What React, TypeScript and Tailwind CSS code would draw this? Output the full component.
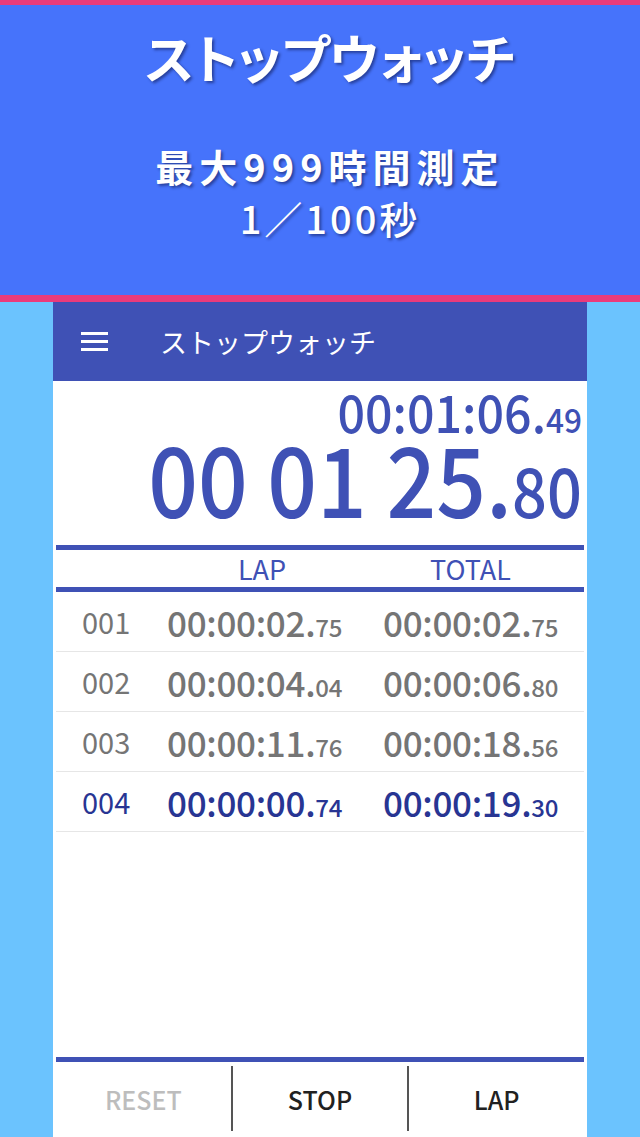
import React from "react";

const JP = '"Noto Sans CJK JP", "Noto Sans", sans-serif';

type Row = { no: string; lap: [string, string]; total: [string, string]; active?: boolean };

const rows: Row[] = [
  { no: "001", lap: ["00:00:02.", "75"], total: ["00:00:02.", "75"] },
  { no: "002", lap: ["00:00:04.", "04"], total: ["00:00:06.", "80"] },
  { no: "003", lap: ["00:00:11.", "76"], total: ["00:00:18.", "56"] },
  { no: "004", lap: ["00:00:00.", "74"], total: ["00:00:19.", "30"], active: true },
];

function Time({ v }: { v: [string, string] }) {
  return (
    <span className="text-[35px] leading-none whitespace-nowrap tracking-[-0.3px] font-medium">
      {v[0]}
      <span className="text-[24px] leading-none">{v[1]}</span>
    </span>
  );
}

export default function App() {
  return (
    <div
      className="w-[640px] h-[1137px] bg-[#6bc3fe] flex flex-col overflow-hidden"
      style={{ fontFamily: JP }}
    >
      {/* Promo header */}
      <header className="h-[302px] shrink-0 pl-[20px] bg-[#4673fb] border-t-[5px] border-b-[7px] border-[#ea3b7b] flex flex-col items-center text-white font-bold [text-shadow:2px_2px_3px_rgba(0,0,40,0.45)]">
        <h1 className="mt-[21px] text-[52px] leading-[62px] [font-feature-settings:'palt']">
          ストップウォッチ
        </h1>
        <div className="mt-[52px] flex flex-col items-center text-[38px] leading-[52px]">
          <span className="tracking-[6px]">最大999時間測定</span>
          <span className="font-medium tracking-[3px]">1／100秒</span>
        </div>
      </header>

      {/* Phone screen */}
      <div className="ml-[53px] w-[534px] flex-1 bg-white flex flex-col">
        {/* App bar */}
        <div className="h-[79px] shrink-0 bg-[#3f51b5] flex items-center">
          <div className="ml-[28px] w-[27px] flex flex-col gap-[5px]">
            <span className="h-[3px] bg-white block" />
            <span className="h-[3px] bg-white block" />
            <span className="h-[3px] bg-white block" />
          </div>
          <span className="ml-[52px] text-white text-[27px] leading-none">ストップウォッチ</span>
        </div>

        {/* Time display */}
        <div className="h-[164px] shrink-0 flex flex-col items-end pr-[5px] pt-[5px] text-[#3f51b5] font-medium">
          <div className="text-[52px] leading-[50px] whitespace-nowrap origin-right scale-x-[0.93]">
            00:01:06.<span className="text-[34px] leading-none">49</span>
          </div>
          <div className="text-[97px] leading-[80px] whitespace-nowrap origin-right scale-x-[0.9]">
            00 01 25.<span className="text-[68px] leading-none">80</span>
          </div>
        </div>

        {/* Lap header */}
        <div className="mx-[3px] h-[47px] shrink-0 border-y-[5px] border-[#3f51b5] grid grid-cols-[111px_190px_1fr] items-center text-[#3f51b5] text-[27px] leading-none">
          <span />
          <span className="text-center">LAP</span>
          <span className="text-center">TOTAL</span>
        </div>

        {/* Lap rows */}
        <div className="mx-[3px] flex flex-col">
          {rows.map((r) => (
            <div
              key={r.no}
              className={`h-[60px] border-b border-[#e6e6e6] grid grid-cols-[111px_216px_1fr] items-center ${
                r.active ? "text-[#283593]" : "text-[#757575]"
              }`}
            >
              <span className="pl-[26px] text-[29px] leading-none">{r.no}</span>
              <Time v={r.lap} />
              <Time v={r.total} />
            </div>
          ))}
        </div>

        {/* Bottom buttons */}
        <div className="mt-auto mx-[3px] h-[80px] shrink-0 border-t-[5px] border-[#3f51b5] flex items-stretch text-[25px] font-medium leading-none">
          <div className="flex-1 flex items-center justify-center text-[#bdbdbd]">RESET</div>
          <div className="w-[2px] mt-[4px] mb-[6px] bg-[#555]" />
          <div className="flex-1 flex items-center justify-center text-[#212121]">STOP</div>
          <div className="w-[2px] mt-[4px] mb-[6px] bg-[#555]" />
          <div className="flex-1 flex items-center justify-center text-[#212121]">LAP</div>
        </div>
      </div>
    </div>
  );
}
